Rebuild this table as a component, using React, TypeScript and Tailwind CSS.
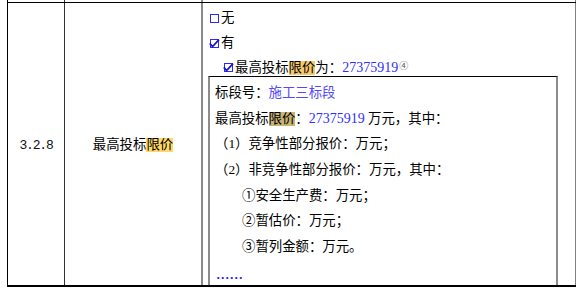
import React from 'react'

const font = { fontFamily: '"Liberation Serif", "Noto Sans CJK SC", serif' }

function Box({ checked }: { checked?: boolean }) {
  return (
    <svg width="11" height="11" viewBox="0 0 11 11" className="shrink-0 mr-[1px] mt-[1px]">
      <rect x="1.5" y="1.5" width="8" height="8" fill="none" stroke="#2a2aff" strokeWidth="1" />
      {checked && (
        <path d="M0.8 5.4 L3.6 8.6 L10 1.6" fill="none" stroke="#1414c8" strokeWidth="1.7" />
      )}
    </svg>
  )
}

export default function App() {
  return (
    <div
      className="w-[582px] h-[291px] bg-white overflow-hidden text-[13.4px] text-black"
      style={font}
    >
      <div className="ml-[7px] w-[569px]">
        {/* sliver of the row above */}
        <div className="flex h-[3px] border-b border-black">
          <div className="w-[58px] border-l border-r border-l-black border-r-[#333]" />
          <div className="w-[138px] border-r-2 border-[#8a8a8a]" />
          <div className="flex-1 border-r border-[#808080]" />
        </div>

        <div className="flex h-[284px] border-b-2 border-black">
          <div className="w-[58px] border-l border-r border-l-black border-r-[#333] flex items-center justify-center">
            <span
              className="text-[13px] tracking-[-1.2px] pt-[3px] text-[#111]"
              style={{ fontFamily: '"Liberation Mono", monospace' }}
            >
              3.2.8
            </span>
          </div>

          <div className="w-[138px] border-r-2 border-[#8a8a8a] flex items-center justify-center pt-[3px]">
            <span>
              最高投标<span className="inline-block leading-[14px] bg-[#ffd966]">限价</span>
            </span>
          </div>

          <div className="flex-1 border-r border-[#808080] flex flex-col pt-[3px]">
            <div className="flex items-center h-[25.5px] pl-[6px]">
              <Box />
              <span>无</span>
            </div>
            <div className="flex items-center h-[25.5px] pl-[6px]">
              <Box checked />
              <span>有</span>
            </div>
            <div className="flex items-center h-[25.5px] pl-[20px]">
              <Box checked />
              <span>
                最高投标<span className="inline-block leading-[14px] bg-[#f9c96c]">限价</span>为：
                <span className="text-[#2f2fff] text-[14px]">27375919</span>
                <sup className="text-[9px] text-[#555] relative top-[-3px] ml-[1px]">④</sup>
              </span>
            </div>

            <div className="flex-1 mt-[-3px] ml-[5px] mr-[17px] border-t border-t-black border-l-2 border-r-2 border-l-[#8c8c8c] border-r-[#8c8c8c] pl-[5px] pt-[3px] leading-[25.6px]">
              <div>
                标段号：<span className="text-[#5548ff]">施工三标段</span>
              </div>
              <div>
                最高投标<span className="inline-block leading-[14px] bg-[#c9b472]">限价</span>：
                <span className="text-[#2f2fff] text-[14px]">27375919</span> 万元，其中：
              </div>
              <div>（1）竞争性部分报价：万元；</div>
              <div>（2）非竞争性部分报价：万元，其中：</div>
              <div className="pl-[27px]">①安全生产费：万元；</div>
              <div className="pl-[27px]">②暂估价：万元；</div>
              <div className="pl-[27px]">③暂列金额：万元。</div>
              <div className="text-[#2020ff] pl-[1px] font-bold relative top-[3px]">……</div>
            </div>
          </div>
        </div>
      </div>
    </div>
  )
}
